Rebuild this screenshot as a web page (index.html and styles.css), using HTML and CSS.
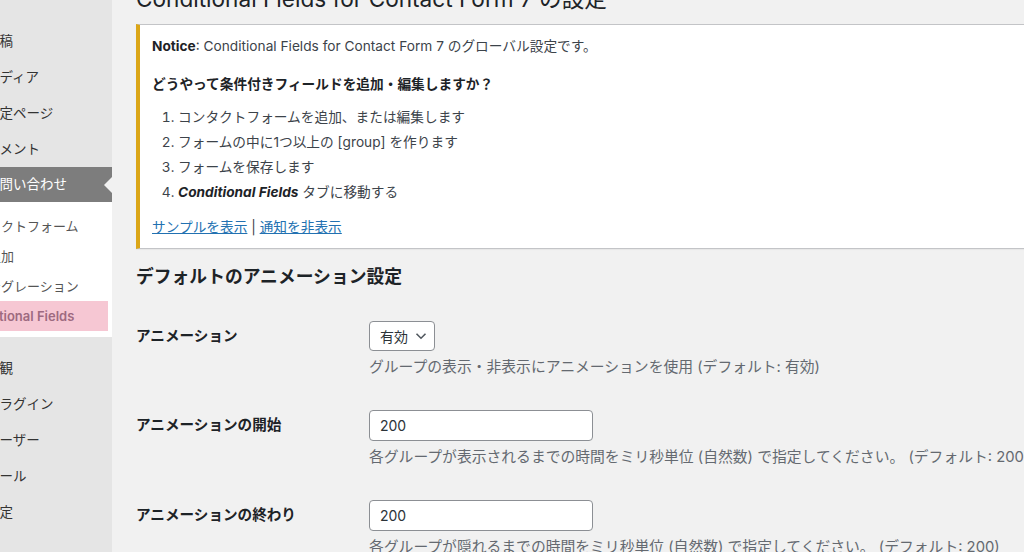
FILE: index.html
```html
<!DOCTYPE html>
<html lang="ja">
<head>
  <meta charset="UTF-8">
  <title>Conditional Fields for Contact Form 7 の設定</title>
  <meta name="viewport" content="width=device-width, initial-scale=1.0">
  <link rel="stylesheet" href="styles.css">
</head>
<body>
  <div class="admin">
    <nav class="sidebar">
      <ul class="menu">
        <li><a href="#">投稿</a></li>
        <li><a href="#">メディア</a></li>
        <li><a href="#">固定ページ</a></li>
        <li><a href="#">コメント</a></li>
        <li class="current">
          <a href="#">お問い合わせ</a>
          <ul class="submenu">
            <li><a href="#">コンタクトフォーム</a></li>
            <li><a href="#">新規追加</a></li>
            <li><a href="#">インテグレーション</a></li>
            <li class="active"><a href="#">Conditional Fields</a></li>
          </ul>
        </li>
        <li class="separator"></li>
        <li><a href="#">外観</a></li>
        <li><a href="#">プラグイン</a></li>
        <li><a href="#">ユーザー</a></li>
        <li><a href="#">ツール</a></li>
        <li><a href="#">設定</a></li>
      </ul>
    </nav>

    <main class="content">
      <h1 class="page-title">Conditional Fields for Contact Form 7 の設定</h1>

      <div class="notice">
        <p class="lead"><strong>Notice</strong>: Conditional Fields for Contact Form 7 のグローバル設定です。</p>
        <p class="howto"><strong>どうやって条件付きフィールドを追加・編集しますか？</strong></p>
        <ol>
          <li>コンタクトフォームを追加、または編集します</li>
          <li>フォームの中に1つ以上の [group] を作ります</li>
          <li>フォームを保存します</li>
          <li><em><strong>Conditional Fields</strong></em> タブに移動する</li>
        </ol>
        <p class="links"><a href="#">サンプルを表示</a> | <a href="#">通知を非表示</a></p>
      </div>

      <h2 class="section-title">デフォルトのアニメーション設定</h2>

      <div class="form-table">
        <div class="row">
          <label class="label">アニメーション</label>
          <div class="field">
            <span class="select">
              <select>
                <option>有効</option>
                <option>無効</option>
              </select>
              <svg width="12" height="8" viewBox="0 0 12 8"><path d="M1.5 1.8 6 6.2 10.5 1.8" fill="none" stroke="#50575e" stroke-width="1.6"/></svg>
            </span>
            <p class="desc">グループの表示・非表示にアニメーションを使用 (デフォルト: 有効)</p>
          </div>
        </div>

        <div class="row">
          <label class="label">アニメーションの開始</label>
          <div class="field">
            <input type="text" class="text-input" value="200">
            <p class="desc">各グループが表示されるまでの時間をミリ秒単位 (自然数) で指定してください。 (デフォルト: 200)</p>
          </div>
        </div>

        <div class="row">
          <label class="label">アニメーションの終わり</label>
          <div class="field">
            <input type="text" class="text-input" value="200">
            <p class="desc">各グループが隠れるまでの時間をミリ秒単位 (自然数) で指定してください。 (デフォルト: 200)</p>
          </div>
        </div>
      </div>
    </main>
  </div>
</body>
</html>
```

FILE: styles.css
```css
:root {
  --page-bg: #f1f1f1;
  --menu-bg: #e5e5e5;
  --menu-text: #333;
  --current-bg: #7d7d7d;
  --text: #1d2327;
  --muted: #646970;
  --link: #2271b1;
  --border: #8c8f94;
  --font: Inter, 'Noto Sans CJK JP', sans-serif;
}

* {
  box-sizing: border-box;
}

body {
  margin: 0;
  height: 100vh;
  overflow: hidden;
  background: var(--page-bg);
  color: #3c434a;
  font-family: var(--font);
}

.admin {
  display: flex;
  height: 100vh;
}

/* Admin menu */
.sidebar {
  flex: none;
  width: 112px;
  background: var(--menu-bg);
  overflow: hidden;
}

.menu {
  list-style: none;
  margin: 0 0 0 -50px;
  padding: 23px 0 0;
  width: 162px;
}

.menu > li > a {
  display: block;
  height: 36px;
  line-height: 36px;
  padding-left: 36px;
  font-size: 13.5px;
  color: var(--menu-text);
  text-decoration: none;
  white-space: nowrap;
}

.menu > li.current > a {
  position: relative;
  height: 35px;
  line-height: 34px;
  background: var(--current-bg);
  color: #fff;
}

.menu > li.current > a::after {
  content: '';
  position: absolute;
  right: 0;
  top: 50%;
  margin-top: -8px;
  border: 8px solid transparent;
  border-right-color: var(--page-bg);
}

.separator {
  height: 13px;
}

.submenu {
  list-style: none;
  margin: 0;
  padding: 9px 0 6px;
  background: #fff;
}

.submenu a {
  display: block;
  height: 30px;
  line-height: 30px;
  padding-left: 12px;
  font-size: 13px;
  color: #555;
  text-decoration: none;
  white-space: nowrap;
}

.submenu .active a {
  margin-right: 4px;
  background: #f6c7d3;
  color: #9e6a80;
  font-weight: 600;
}

/* Content */
.content {
  flex: 1;
  min-width: 0;
  padding-left: 24px;
  overflow: hidden;
}

.page-title {
  margin: -16px 0 10px;
  font-size: 22.6px;
  line-height: 30px;
  font-weight: 400;
  color: var(--text);
  white-space: nowrap;
}

.notice {
  margin-right: -20px;
  padding: 11px 12px;
  background: #fff;
  border: 1px solid #c3c4c7;
  border-left: 4px solid #dba617;
  box-shadow: 0 1px 1px rgba(0, 0, 0, 0.04);
  font-size: 13.7px;
  line-height: 20px;
}

.notice p {
  margin: 0;
}

.notice strong {
  color: var(--text);
}

.notice .howto {
  margin-top: 18px;
}

.notice ol {
  margin: 13px 0 0;
  padding-left: 26px;
}

.notice li {
  margin-bottom: 5px;
}

.notice li:last-child {
  margin-bottom: 0;
}

.notice .links {
  margin-top: 15px;
}

.notice a {
  color: var(--link);
  text-decoration: underline;
}

.section-title {
  margin: 16px 0 0;
  font-size: 17.8px;
  line-height: 24px;
  font-weight: bold;
  color: var(--text);
}

.form-table {
  display: flex;
  flex-direction: column;
  gap: 33px;
  margin-top: 32px;
}

.row {
  display: flex;
}

.label {
  flex: none;
  width: 233px;
  line-height: 31px;
  font-size: 14.6px;
  font-weight: bold;
  color: var(--text);
}

.field {
  min-width: 0;
}

.select {
  position: relative;
  display: inline-block;
  vertical-align: top;
}

.select select {
  appearance: none;
  width: 66px;
  height: 30px;
  padding: 0 24px 0 10px;
  border: 1px solid var(--border);
  border-radius: 4px;
  background: #fff;
  color: #2c3338;
  font: 14px var(--font);
}

.select svg {
  position: absolute;
  right: 8px;
  top: 11px;
  pointer-events: none;
}

.text-input {
  display: block;
  width: 224px;
  height: 31px;
  padding: 0 10px;
  border: 1px solid var(--border);
  border-radius: 4px;
  background: #fff;
  color: #2c3338;
  font: 14px var(--font);
}

.desc {
  margin: 6px 0 0;
  font-size: 14.8px;
  line-height: 20px;
  color: var(--muted);
  white-space: nowrap;
}
```
